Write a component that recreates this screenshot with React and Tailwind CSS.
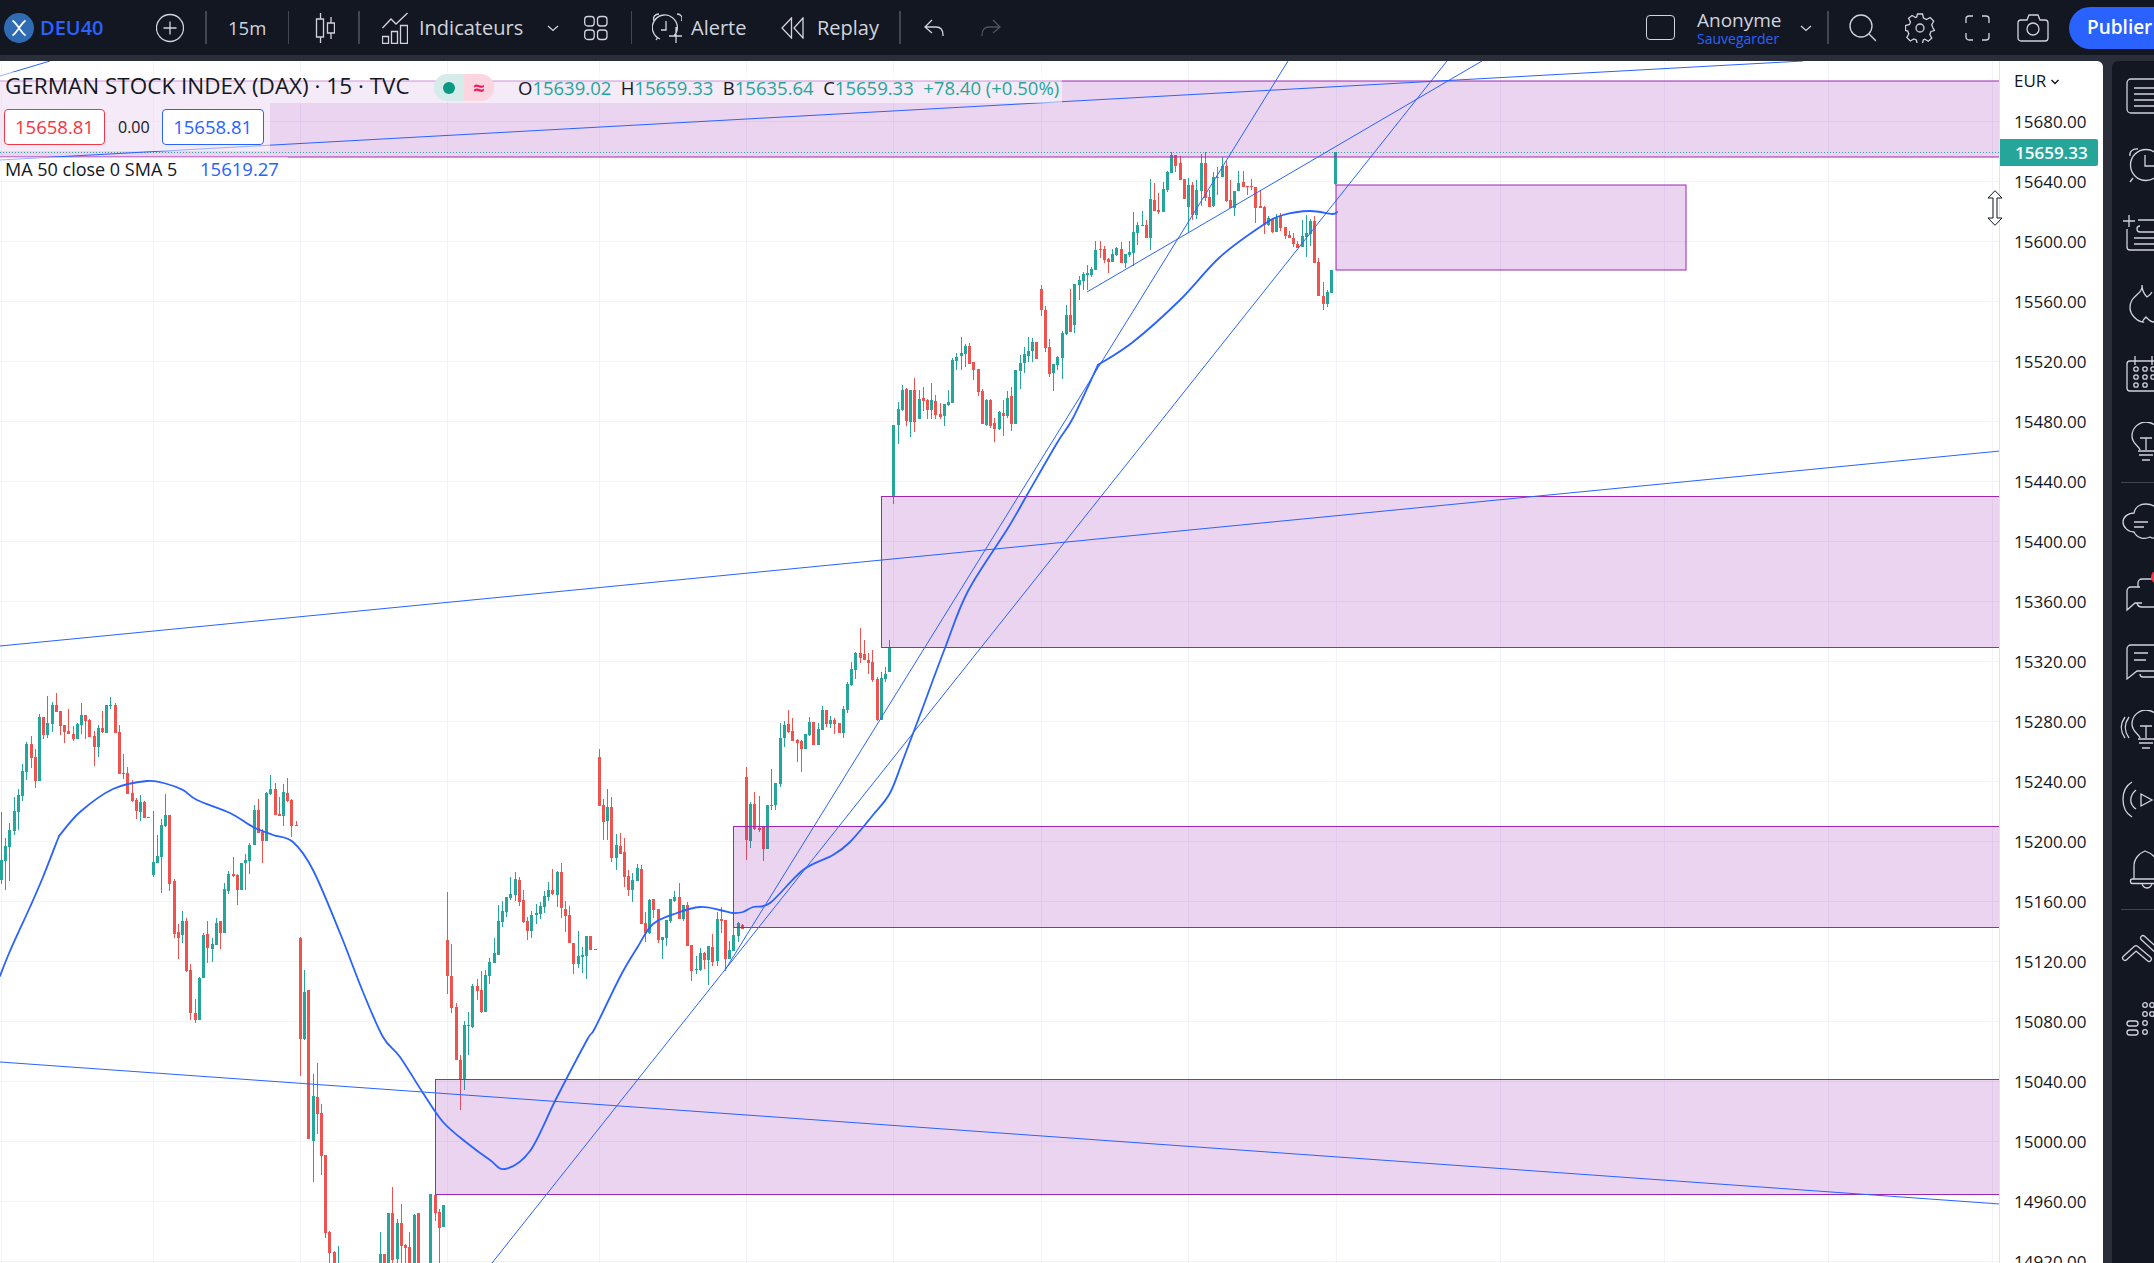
// TradingView-style chart page: DEU40, 15m
const UP = '#26a69a'
const DOWN = '#ef5350'
const BLUE = '#2962ff'
const PURPLE = '#9c27b0'

// candles read off the reference: [x, high, top, bottom, low, isDown]
const SEC_A = [[4,395,540,600,612,0],[16,475,498,543,632,0],[28,430,450,500,603,0],[43,352,393,453,465,0],[55,327,345,395,450,0],[67,252,273,348,363,0],[79,186,192,276,300,0],[94,168,192,234,264,1],[106,207,231,303,324,1],[118,102,111,303,303,0],[130,111,111,165,177,1],[142,48,129,165,174,0],[157,66,75,132,156,0],[169,39,75,96,96,1],[181,93,93,138,165,1],[193,135,135,156,189,1],[205,87,153,162,162,1],[220,138,162,177,183,1],[232,129,132,177,177,0],[244,69,105,135,162,0],[256,105,105,123,177,1],[268,117,120,171,171,1],[283,153,168,201,258,1],[295,135,144,201,231,0],[307,93,144,156,159,1],[319,75,75,159,159,0],[331,51,75,78,87,0],[346,69,75,159,159,1],[358,135,156,282,282,1],[370,222,279,282,297,0],[382,261,279,342,342,1],[397,300,339,363,366,1],[409,354,360,393,417,1],[421,345,366,396,423,0],[433,363,366,414,414,1],[445,411,411,414,414,0],[460,393,546,585,591,0],[472,465,528,549,549,0],[484,417,435,531,639,0],[496,342,405,438,441,0],[508,405,405,612,633,1],[523,597,603,762,774,1],[535,732,756,774,837,1],[547,693,723,765,789,0],[559,714,723,873,876,1],[571,852,870,999,1020,1],[586,957,999,1020,1029,1],[598,891,894,1020,1020,0],[610,759,765,894,894,0],[622,723,762,804,849,1],[637,774,792,807,846,0],[649,714,729,795,795,0],[661,723,723,759,807,1],[673,609,627,759,759,0],[685,573,582,633,642,0],[700,531,582,588,591,1],[712,582,585,630,675,1],[724,549,549,630,630,0],[736,522,540,549,630,0],[748,489,495,543,582,0],[763,375,390,495,495,0],[775,357,390,459,459,1],[787,447,456,483,549,1],[799,336,339,483,483,0],[811,285,327,342,345,0],[826,309,327,405,405,1],[838,351,402,408,408,1],[850,312,336,408,438,0],[862,294,339,363,366,1],[874,357,360,438,471,1],[889,423,435,438,438,1]]

// these are already in page pixels
const SEC_REAL = [[300,937,938,1039,1076,1],[304,970,992,1039,1040,0],[308,990,990,1139,1139,1],[313,1074,1096,1141,1182,0],[317,1063,1097,1114,1134,1],[321,1104,1113,1156,1175,1],[325,1155,1155,1233,1238,1],[329,1231,1232,1253,1263,1],[334,1251,1252,1264,1264,1],[338,1246,1264,1264,1264,0],[456,1003,1007,1060,1060,1],[460,1055,1060,1080,1110,1],[464,1021,1025,1080,1090,0],[468,1012,1025,1026,1055,0]]

const SEC_B = [[301,426,492,519,519,0],[313,492,492,519,519,1],[325,369,369,519,519,0],[337,291,369,510,519,1],[352,387,399,507,519,0],[364,342,399,468,519,1],[376,462,465,474,519,1],[388,426,471,519,519,1],[403,372,375,519,519,0],[415,369,369,519,519,1],[451,312,312,519,519,0],[466,220,315,369,393,1],[478,357,366,414,519,1],[490,345,345,411,411,0]]

const SEC_C = [[142,816,960,1068,1122,1],[154,972,1068,1164,1179,1],[217,1092,1098,1220,1224,0],[232,1077,1098,1113,1140,1],[244,1053,1110,1176,1179,1],[256,1050,1065,1176,1176,0],[268,1014,1026,1068,1092,0],[283,954,999,1029,1029,0],[295,855,903,1005,1005,0],[307,842,873,906,921,0],[319,830,831,876,891,0],[331,770,822,835,840,0],[346,756,777,825,843,0],[358,771,780,846,858,1],[370,810,840,906,909,1],[382,891,903,933,960,1],[394,873,885,933,954,0],[409,852,879,885,912,0],[421,846,858,882,897,0],[433,813,828,861,879,0],[445,786,810,831,843,0],[457,747,810,822,825,1],[472,753,756,825,861,0],[484,729,756,864,894,1],[496,843,867,888,936,1],[508,858,885,969,969,1],[520,969,969,1032,1062,1],[535,933,1008,1032,1044,0],[547,981,1005,1011,1059,0],[559,948,948,1008,1077,0],[571,948,948,990,990,1],[586,987,987,990,990,0],[598,387,411,558,558,1],[610,537,555,606,660,1],[622,507,561,603,660,0],[634,531,561,714,726,1],[649,642,675,714,750,0],[661,639,678,702,702,1],[673,654,696,771,801,1],[685,750,768,810,828,1],[697,759,780,810,846,0],[712,732,744,783,783,0],[724,735,747,912,912,1],[736,876,909,939,966,1],[748,837,840,939,942,0],[760,837,837,870,894,1],[775,867,867,960,969,1],[787,951,951,960,1017,0],[799,900,900,954,978,0],[811,837,837,903,909,0],[823,813,831,843,846,0],[838,789,831,897,897,1],[850,855,855,897,903,0],[862,846,855,978,978,1],[874,975,975,1053,1083,1],[889,1008,1047,1050,1062,0],[901,984,999,1050,1053,0],[913,996,999,1020,1047,1],[925,978,978,1020,1095,0],[937,942,981,1026,1038,1],[952,876,897,1023,1038,0],[964,861,897,903,939,1],[976,900,900,1017,1053,1],[988,963,990,1017,1017,0],[1000,900,945,993,993,0],[1015,906,909,948,966,0],[1027,912,915,927,927,1],[1039,441,471,660,720,1],[1051,546,552,663,684,0],[1063,516,552,627,630,1],[1078,528,624,630,636,1],[1090,618,621,687,723,1],[1102,555,555,687,687,0],[1114,447,555,558,570,0],[1126,489,489,555,570,0],[1141,309,354,492,501,0],[1153,303,315,354,381,0],[1165,270,312,336,339,1],[1177,294,333,363,363,1],[1192,357,360,369,426,1],[1204,360,363,387,456,1],[1216,342,342,387,387,0],[1228,291,306,345,348,0],[1240,306,306,375,375,1],[1255,309,327,375,375,0],[1267,258,270,330,330,0],[1279,270,270,312,321,1],[1291,288,300,312,324,0],[1303,294,300,312,342,1],[1318,309,309,339,339,1],[1330,258,267,339,354,0],[1342,186,192,270,279,0],[1354,126,147,195,198,0],[1366,96,99,150,177,0],[1381,24,99,114,129,1],[1393,60,102,120,120,1],[1405,99,120,129,162,1],[1417,90,126,180,186,1],[1432,171,177,300,303,1],[1444,156,174,300,300,0],[1456,141,162,177,186,0],[1468,60,84,156,156,0]]

const SEC_D = [[130,885,885,1100,1122,0],[145,816,838,885,942,0],[157,765,780,840,843,0],[169,774,777,873,888,1],[181,780,780,876,921,0],[193,744,780,876,906,1],[208,780,807,867,867,0],[220,771,804,813,843,1],[232,807,810,840,867,1],[244,759,810,840,867,0],[256,795,813,855,867,1],[271,819,852,861,867,1],[283,822,822,858,888,0],[295,780,816,825,828,0],[307,684,690,819,819,0],[319,669,681,693,720,0],[334,621,669,678,720,0],[346,642,648,672,711,0],[358,639,648,702,702,1],[370,696,696,720,750,1],[385,717,717,786,798,1],[397,777,783,882,882,1],[409,807,810,885,888,0],[421,807,810,888,894,1],[433,864,879,897,936,1],[448,843,846,897,900,0],[460,810,849,858,918,1],[472,783,804,858,864,0],[484,771,798,882,903,1],[496,720,720,882,882,0],[511,675,699,723,777,0],[523,651,672,699,729,0],[535,621,663,678,696,0],[547,624,636,663,696,0],[559,636,636,687,687,1],[574,465,477,540,558,1],[586,528,540,654,666,1],[598,627,651,732,741,1],[610,702,702,729,783,0],[622,678,681,705,720,0],[637,603,609,684,747,0],[649,525,555,612,615,0],[661,477,555,606,606,1],[673,462,462,585,609,0],[688,438,450,465,510,0],[700,426,432,453,480,0],[712,405,429,435,480,0],[724,411,417,435,441,0],[736,333,360,420,420,0],[751,333,357,360,384,1],[763,348,357,390,399,1],[775,384,387,396,429,1],[787,357,372,396,396,0],[799,351,354,375,378,0],[814,336,357,399,399,1],[826,372,372,399,414,0],[838,333,366,375,381,0],[850,246,306,369,408,0],[862,276,285,309,345,0],[877,243,285,288,288,0],[889,270,285,324,324,1],[901,147,207,324,360,0],[913,159,210,243,243,1],[925,189,240,246,252,1],[940,156,177,246,246,0],[952,123,126,180,186,0],[964,66,75,129,129,0],[976,75,75,108,126,1],[991,78,99,150,150,1],[1003,147,147,207,207,1],[1015,144,165,231,309,0],[1027,156,165,255,270,1],[1039,150,180,255,267,0],[1054,72,99,183,228,0],[1066,66,99,204,213,1],[1078,180,201,231,231,1],[1090,126,141,228,231,0],[1102,111,141,144,195,1],[1117,81,108,141,141,0],[1129,93,108,213,216,1],[1141,150,210,234,234,1],[1153,183,183,234,258,0],[1165,123,159,183,183,0],[1180,123,156,171,171,1],[1192,168,168,171,195,1],[1204,147,168,171,180,1],[1216,171,171,234,279,1],[1231,180,228,234,234,1],[1243,228,231,285,312,1],[1255,258,264,285,288,0],[1267,267,267,306,309,1],[1279,252,264,306,306,0],[1291,249,258,294,303,1],[1306,291,291,318,327,1],[1318,303,315,324,324,1],[1330,309,324,342,351,1],[1342,333,342,354,354,1],[1357,270,318,351,351,0],[1369,255,309,321,381,0],[1381,267,273,312,348,0],[1393,258,273,399,399,1],[1405,384,396,498,498,1],[1420,456,498,522,540,1],[1432,480,486,522,531,0],[1444,420,420,489,489,0],[1456,66,66,162,165,0]]

const scaled = (rows, ox, oy) =>
  rows.map(([x, h, t, b, l, d]) => [x / 3 + ox, h / 3 + oy, t / 3 + oy, b / 3 + oy, l / 3 + oy, d])

const CANDLES = [
  ...scaled(SEC_A, 0, 680),
  ...SEC_REAL,
  ...scaled(SEC_B, 280, 1090),
  ...scaled(SEC_C, 400, 620),
  ...scaled(SEC_D, 850, 130),
]

// the MA has two real corners, so it is three smooth runs
const MA_RUNS = [
  [[0,976],[10,951],[30,907],[43,877],[59,836]],
  [[59,836],[80,812],[113,789],[147,781],[167,784],[183,790],[197,800],[230,813],[253,827],[273,835],[293,842],[313,870],[340,933],[363,992],[383,1037],[400,1057],[423,1093],[443,1122],[467,1143],[490,1160],[505,1169],[530,1151],[556,1099],[587,1040],[595,1028],[620,977],[637,948],[653,924],[677,913],[700,907],[720,910],[733,913],[743,912],[753,907],[770,903],[803,870],[833,855],[850,842],[873,815],[890,793],[903,760],[920,715],[945,648],[968,591],[1008,528],[1027,495],[1057,443],[1073,418],[1098,365]],
  [[1098,365],[1133,342],[1180,300],[1220,257],[1263,225],[1283,215],[1310,211],[1332,214],[1337,212]],
]

function smoothPath(pts) {
  let d = `M${pts[0][0]} ${pts[0][1]}`
  for (let i = 0; i < pts.length - 1; i++) {
    const p0 = pts[i - 1] || pts[i]
    const p1 = pts[i]
    const p2 = pts[i + 1]
    const p3 = pts[i + 2] || p2
    const c1x = p1[0] + (p2[0] - p0[0]) / 6
    const c1y = p1[1] + (p2[1] - p0[1]) / 6
    const c2x = p2[0] - (p3[0] - p1[0]) / 6
    const c2y = p2[1] - (p3[1] - p1[1]) / 6
    d += `C${c1x} ${c1y} ${c2x} ${c2y} ${p2[0]} ${p2[1]}`
  }
  return d
}

const LINES = [
  [0, 646, 2000, 451],
  [0, 1062, 2000, 1204],
  [0, 160, 1803, 61],
  [0, 76, 50, 61],
  [725, 970, 1288, 61],
  [492, 1263, 1447, 61],
  [1087, 292, 1482, 61],
]

const ZONES = [
  [-2, 81, 2004, 76],
  [1336, 185, 350, 85],
  [881.5, 496.5, 1120, 151],
  [733.5, 826.5, 1270, 101],
  [435.5, 1079.5, 1570, 115],
]

const GRID_X = [1, 153, 300, 447, 599, 746, 893, 1041, 1188, 1336, 1500, 1664, 1828, 1992]
const PRICES = Array.from({ length: 20 }, (_, k) => 15680 - 40 * k)

function Chart() {
  return (
    <svg width="1999" height="1202" className="block">
      <g transform="translate(0,-61)">
        {GRID_X.map((x) => (
          <rect key={x} x={x} y={61} width="1" height="1202" fill="#f0f3fa" />
        ))}
        {PRICES.map((_, k) => (
          <rect key={k} x={0} y={121 + 60 * k} width="1999" height="1" fill="#f0f3fa" />
        ))}
        <g shapeRendering="crispEdges">
          {CANDLES.map(([x, h, t, b, l, d], i) => {
            const cx = Math.floor(x)
            const color = d ? DOWN : UP
            return (
              <g key={i} fill={color}>
                <rect x={cx} y={Math.round(h)} width="1" height={Math.max(1, Math.round(l - h))} />
                <rect x={cx - 1} y={Math.round(t)} width="3" height={Math.max(1, Math.round(b - t))} />
              </g>
            )
          })}
        </g>
        {ZONES.map(([x, y, w, h], i) => (
          <rect key={i} x={x} y={y} width={w} height={h} fill={PURPLE} fillOpacity="0.2" stroke={PURPLE} strokeWidth="1" />
        ))}
        <line x1="0" y1="152.5" x2="1999" y2="152.5" stroke={UP} strokeWidth="1" strokeDasharray="1 2" />
        {LINES.map(([a, b, c, d], i) => (
          <line key={i} x1={a} y1={b} x2={c} y2={d} stroke={BLUE} strokeWidth="1" />
        ))}
        {MA_RUNS.map((run, i) => (
          <path key={i} d={smoothPath(run)} fill="none" stroke={BLUE} strokeWidth="1.8" strokeLinecap="round" />
        ))}
      </g>
    </svg>
  )
}

function Legend() {
  return (
    <div className="absolute left-0 top-[11px] flex flex-col items-start text-[#131722]">
      <div className="flex h-[31px] w-[1062px] items-center bg-white/50 pl-[5px]">
        <span className="mb-[3px] w-[429px] text-[22.5px] leading-none whitespace-nowrap">GERMAN STOCK INDEX (DAX) · 15 · TVC</span>
        <span className="flex h-[27px] w-[60px] overflow-hidden rounded-[13px]">
          <span className="flex w-[30px] items-center justify-center bg-[#d5ecea]">
            <span className="size-[12px] rounded-full bg-[#089981]" />
          </span>
          <span className="flex w-[30px] items-center justify-center bg-[#fbd5e0] text-[20px] font-bold leading-none text-[#e91e63]">≈</span>
        </span>
        <span className="ml-[24px] mt-[2px] flex gap-[9.5px] text-[18.5px] leading-none whitespace-nowrap">
          <span>O<span className="text-[#26a69a]">15639.02</span></span>
          <span>H<span className="text-[#26a69a]">15659.33</span></span>
          <span>B<span className="text-[#26a69a]">15635.64</span></span>
          <span>C<span className="text-[#26a69a]">15659.33</span></span>
          <span className="text-[#26a69a]">+78.40 (+0.50%)</span>
        </span>
      </div>
      <div className="flex h-[48px] w-[270px] items-center bg-white/50 pl-[4px]">
        <span className="flex h-[36px] w-[101px] items-center justify-center rounded-[4px] border border-[#f23645] bg-white text-[18.5px] text-[#f23645]">15658.81</span>
        <span className="ml-[13px] text-[16px]">0.00</span>
        <span className="ml-[12px] flex h-[36px] w-[102px] items-center justify-center rounded-[4px] border border-[#2962ff] bg-white text-[18.5px] text-[#2962ff]">15658.81</span>
      </div>
      <div className="mt-[6px] flex h-[24px] w-[288px] items-center bg-white/50 pl-[5px] whitespace-nowrap">
        <span className="w-[195px] text-[18px]">MA 50 close 0 SMA 5</span>
        <span className="text-[18.5px] text-[#2962ff]">15619.27</span>
      </div>
    </div>
  )
}

function PriceAxis() {
  return (
    <div className="relative w-[104px] shrink-0 border-l border-[#e0e3eb] text-[17px] text-[#131722]">
      <div className="flex h-[30.5px] items-end pb-[3px] pl-[14px] leading-none">
        EUR
        <svg width="10" height="8" viewBox="0 0 10 8" className="mb-[3px] ml-[4px]">
          <path d="M1.5 2 5 5.5 8.5 2" fill="none" stroke="#131722" strokeWidth="1.5" />
        </svg>
      </div>
      {PRICES.map((p) => (
        <div key={p} className="flex h-[60px] items-center pl-[14px]">{p}.00</div>
      ))}
      <div className="absolute left-0 top-[78px] flex h-[27px] w-[98px] items-center rounded-r-[2px] bg-[#26a69a] pl-[15px] font-semibold text-white">
        15659.33
      </div>
    </div>
  )
}

function ResizeCursor() {
  return (
    <svg width="16" height="36" viewBox="0 0 16 36" className="absolute left-[1987px] top-[129px]">
      <path d="M8 .7 15 8H10V28H15L8 35.3 1 28H6V8H1Z" fill="#fff" stroke="#131722" strokeWidth="1" />
    </svg>
  )
}

const ICON = {
  fill: 'none',
  stroke: '#d1d4dc',
  strokeWidth: 1.3,
}

function Tool({ w, h = 32, className = '', children, dim }) {
  return (
    <svg width={w} height={h} viewBox={`0 0 ${w} ${h}`} className={`shrink-0 ${className}`} {...ICON} stroke={dim ? '#50535e' : '#d1d4dc'}>
      {children}
    </svg>
  )
}

function TopBar() {
  return (
    <div className="flex h-[55px] shrink-0 items-center bg-[#131722] pl-[4px] text-[20px] text-[#d1d4dc]">
      <svg width="30" height="30" viewBox="0 0 30 30" className="shrink-0">
        <circle cx="15" cy="15" r="15" fill="#2f6cb3" />
        <path d="M8.5 7.5c3 2 4.5 5 6.500 7.500s3.500 5.500 6.500 7.500M21.500 7.500c-3 2-4.500 5-6.500 7.500s-3.500 5.500-6.500 7.500" fill="none" stroke="#fff" strokeWidth="1.8" />
      </svg>
      <span className="ml-[6px] w-[100px] shrink-0 text-[20px] font-semibold text-[#2962ff]">DEU40</span>
      <Tool w={28} className="ml-[16px]">
        <circle cx="14" cy="16" r="13.500" />
        <path d="M14 9.500v13M7.500 16h13" />
      </Tool>
      <div className="ml-[21px] h-[33px] w-[2px] shrink-0 bg-[#434651]" />
      <span className="ml-[21px] w-[39px] shrink-0 text-[18.5px] font-medium">15m</span>
      <div className="ml-[21px] h-[33px] w-px shrink-0 bg-[#434651]" />
      <Tool w={20} className="ml-[26px]">
        <path d="M5.500 1v6M5.500 25v6M1.500 7h7v18h-7zM16 5v6M16 21v6M12.500 11h7v10h-7z" />
      </Tool>
      <div className="ml-[23px] h-[33px] w-[2px] shrink-0 bg-[#434651]" />
      <Tool w={26} className="ml-[22px]">
        <path d="M.500 16 9 7l5 5L25.500 1M.500 24.500h6v7h-6zM9.500 19.500h6v12h-6zM18.500 13.500h7v18h-7z" />
      </Tool>
      <span className="ml-[11px] w-[105px] shrink-0 whitespace-nowrap">Indicateurs</span>
      <Tool w={12} h={10} className="ml-[23px]">
        <path d="M1 3l5 4.500L11 3" />
      </Tool>
      <Tool w={24} className="ml-[25px]">
        <rect x=".7" y="4.500" width="9.500" height="9.500" rx="3" />
        <rect x="13.500" y="4.500" width="9.500" height="9.500" rx="3" />
        <rect x=".7" y="18" width="9.500" height="9.500" rx="3" />
        <rect x="13.500" y="18" width="9.500" height="9.500" rx="3" />
      </Tool>
      <div className="ml-[23px] h-[33px] w-px shrink-0 bg-[#434651]" />
      <Tool w={30} h={32} className="ml-[20px]">
        <path d="M22 24A12.500 12.500 0 1 0 8 27M14 9v9H9M2 9c-1.500-4 1-7 5-7M25 2c4 0 6 3 4.500 7M6 25l-2 3M24 15v16M17 24h13" />
      </Tool>
      <span className="ml-[9px] w-[58px] shrink-0">Alerte</span>
      <Tool w={23} h={22} className="ml-[32px]">
        <path d="M10.500 1 1 11l9.500 10zM22 1l-9 10 9 10z" />
      </Tool>
      <span className="ml-[13px] w-[61px] shrink-0">Replay</span>
      <div className="ml-[21px] h-[33px] w-[2px] shrink-0 bg-[#434651]" />
      <Tool w={20} h={18} className="ml-[23px]">
        <path d="M8 1 1 8l7 6M1 8h11c4.500 0 7 3 7 8v1" />
      </Tool>
      <Tool w={20} h={18} className="ml-[37px]" dim>
        <path d="M12 1l7 7-7 6M19 8H8C3.500 8 1 11 1 16v1" />
      </Tool>

      <div className="ml-auto flex items-center">
        <div className="h-[25px] w-[29px] shrink-0 rounded-[4px] border border-[#d1d4dc]" />
        <div className="ml-[22px] flex w-[85px] shrink-0 flex-col">
          <span className="text-[19px] leading-[22px]">Anonyme</span>
          <span className="text-[14px] leading-[15px] text-[#2962ff]">Sauvegarder</span>
        </div>
        <Tool w={12} h={10} className="ml-[18px]">
          <path d="M1 3l5 4.500L11 3" />
        </Tool>
        <div className="ml-[15px] h-[33px] w-[2px] shrink-0 bg-[#434651]" />
        <Tool w={27} h={28} className="ml-[20px]">
          <circle cx="12" cy="12" r="11" />
          <path d="m20 20 7 7" />
        </Tool>
        <Tool w={30} h={30} className="ml-[29px]">
          <circle cx="15" cy="15" r="4" />
          <path d="M12.500 1h5l1 4 3 1.500 3.700-2 3.500 3.500-2 3.700L28 15l1.500 2.500-3.500 1-1.200 3 2 3.700-3.500 3-3.500-2-1.500.8-1 4h-5l-1-4-2.500-1-3.500 2-3.500-3.500 2-3.500-1-3L.5 17.500v-5l4-1 1-2.500-2-3.700L7 2.500l3.700 2 1-.5z" />
        </Tool>
        <Tool w={25} h={26} className="ml-[30px]">
          <path d="M1 8V4a3 3 0 0 1 3-3h4M17 1h4a3 3 0 0 1 3 3v4M24 18v4a3 3 0 0 1-3 3h-4M8 25H4a3 3 0 0 1-3-3v-4" />
        </Tool>
        <Tool w={32} h={28} className="ml-[27px]">
          <path d="M1 9a3 3 0 0 1 3-3h6l2-5h9l2 5h5a3 3 0 0 1 3 3v15a3 3 0 0 1-3 3H4a3 3 0 0 1-3-3z" />
          <circle cx="16" cy="15" r="6" />
        </Tool>
        <div className="ml-[20px] flex h-[42px] w-[85px] shrink-0 items-center overflow-hidden rounded-l-[21px] bg-[#2962ff] pl-[18px] text-[19px] font-semibold whitespace-nowrap text-white">
          Publier
        </div>
      </div>
    </div>
  )
}

function Side({ children }) {
  return (
    <div className="flex h-[69.3px] shrink-0 items-center">
      <svg width="42" height="40" viewBox="0 0 42 40" className="overflow-hidden" {...ICON}>
        {children}
      </svg>
    </div>
  )
}

function Bulb() {
  return <path d="M28 28c0-3-8-6-8-14a14 14 0 0 1 28 0M28 16h12M34 16v12M26 29h16M27 33h14M30 38h8" />
}

function Sidebar() {
  return (
    <div className="mt-0 flex-1 overflow-hidden rounded-tl-[6px] bg-[#131722]">
      <Side>
        <rect x="15" y="3" width="40" height="34" rx="4" />
        <path d="M22 12h28M22 18h28M22 24h28M22 30h28" />
      </Side>
      <Side>
        <circle cx="34" cy="20" r="15.500" />
        <path d="M33 10v11h9M18 11c-1-4 3-8 8-7M21 33l-3 4" />
      </Side>
      <Side>
        <path d="M11 7h12M17 1v12M26 6h24M28 12a3 3 0 0 0 0 6h24M15 15v18a3 3 0 0 0 3 3h32M22 24h28M22 30h28" />
      </Side>
      <Side>
        <path d="M30 1c1 7-6 9-10 15-3 5-3 12 2 17 3 3 6 5 9 5-1-1 1-3 3-5 2 2 4 5 8 5M30 1c0 5 2 9 5 12 2-1 4-3 5-5" />
      </Side>
      <Side>
        <rect x="15" y="8" width="40" height="30" rx="3" />
        <path d="M23 3v9M40 3v9" />
        <circle cx="24" cy="16" r="2.200" /><circle cx="33" cy="16" r="2.200" /><circle cx="41" cy="16" r="2.200" />
        <circle cx="24" cy="24" r="2.200" /><circle cx="33" cy="24" r="2.200" /><circle cx="41" cy="24" r="2.200" />
        <circle cx="24" cy="32" r="2.200" /><circle cx="33" cy="32" r="2.200" />
      </Side>
      <Side><Bulb /></Side>
      <div className="flex h-[11px] items-center"><div className="h-px w-full translate-x-[9px] bg-[#434651]" /></div>
      <Side>
        <path d="M48 11c-2-6-8-9-14-9-6 0-11 3-12 9-6 0-11 4-11 9s5 10 11 10c3 6 10 8 16 5 3 2 6 1 8 0M22 20h14M22 25h10" />
      </Side>
      <Side>
        <path d="M28 15h-9a4 4 0 0 0-4 4v19l8-7h7M26 15v-4a4 4 0 0 1 4-4h14M25 31a5 5 0 0 0 5 4h20" />
        <circle cx="46" cy="5" r="7" fill="#f23645" stroke="none" />
      </Side>
      <Side>
        <path d="M50 4H19a4 4 0 0 0-4 4v30l10-8h25M22 12h14M22 19h12M28 33a3 3 0 0 0 3 3h19" />
      </Side>
      <Side>
        <Bulb />
        <path d="M17 7c-5 7-5 14 0 21M13 7c-5 7-5 14 0 21" />
      </Side>
      <Side>
        <path d="M20 2C8 9 8 30 20 37M24 10c-7 6-7 14 0 19M29 14l11 6-11 6z" />
      </Side>
      <Side>
        <path d="M22 30V17C22 9 28 4 33 2c6 2 13 7 13 15v13M30 34a5 5 0 0 0 10 0" />
        <rect x="18.500" y="30" width="40" height="4.500" rx="2" />
      </Side>
      <div className="flex h-[11px] items-center"><div className="h-px w-full translate-x-[9px] bg-[#434651]" /></div>
      <Side>
        <path d="M13 29 24 19l13 11M31 9l14 13" stroke="#d1d4dc" strokeWidth="6" strokeLinecap="round" strokeLinejoin="round" />
        <path d="M13 29 24 19l13 11M31 9l14 13" stroke="#131722" strokeWidth="3.500" strokeLinecap="round" strokeLinejoin="round" />
      </Side>
      <Side>
        <circle cx="33" cy="6" r="2.300" /><circle cx="40" cy="6" r="2.300" />
        <circle cx="33" cy="15" r="2.300" /><circle cx="40" cy="15" r="2.300" />
        <circle cx="33" cy="24" r="2.300" /><circle cx="33" cy="33" r="2.300" />
        <rect x="15" y="22" width="11" height="5" rx="2.500" />
        <rect x="15" y="31" width="11" height="5" rx="2.500" />
      </Side>
    </div>
  )
}

export default function App() {
  return (
    <div className="flex h-screen w-screen flex-col overflow-hidden bg-[#2a2e39] font-['Open_Sans',sans-serif]">
      <TopBar />
      <div className="flex flex-1 pt-[6px]">
        <div className="relative flex w-[2103px] shrink-0 overflow-hidden rounded-tr-[6px] bg-white">
          <div className="relative w-[1999px] shrink-0">
            <Chart />
            <Legend />
          </div>
          <PriceAxis />
          <ResizeCursor />
        </div>
        <div className="w-[9px] shrink-0" />
        <Sidebar />
      </div>
    </div>
  )
}
